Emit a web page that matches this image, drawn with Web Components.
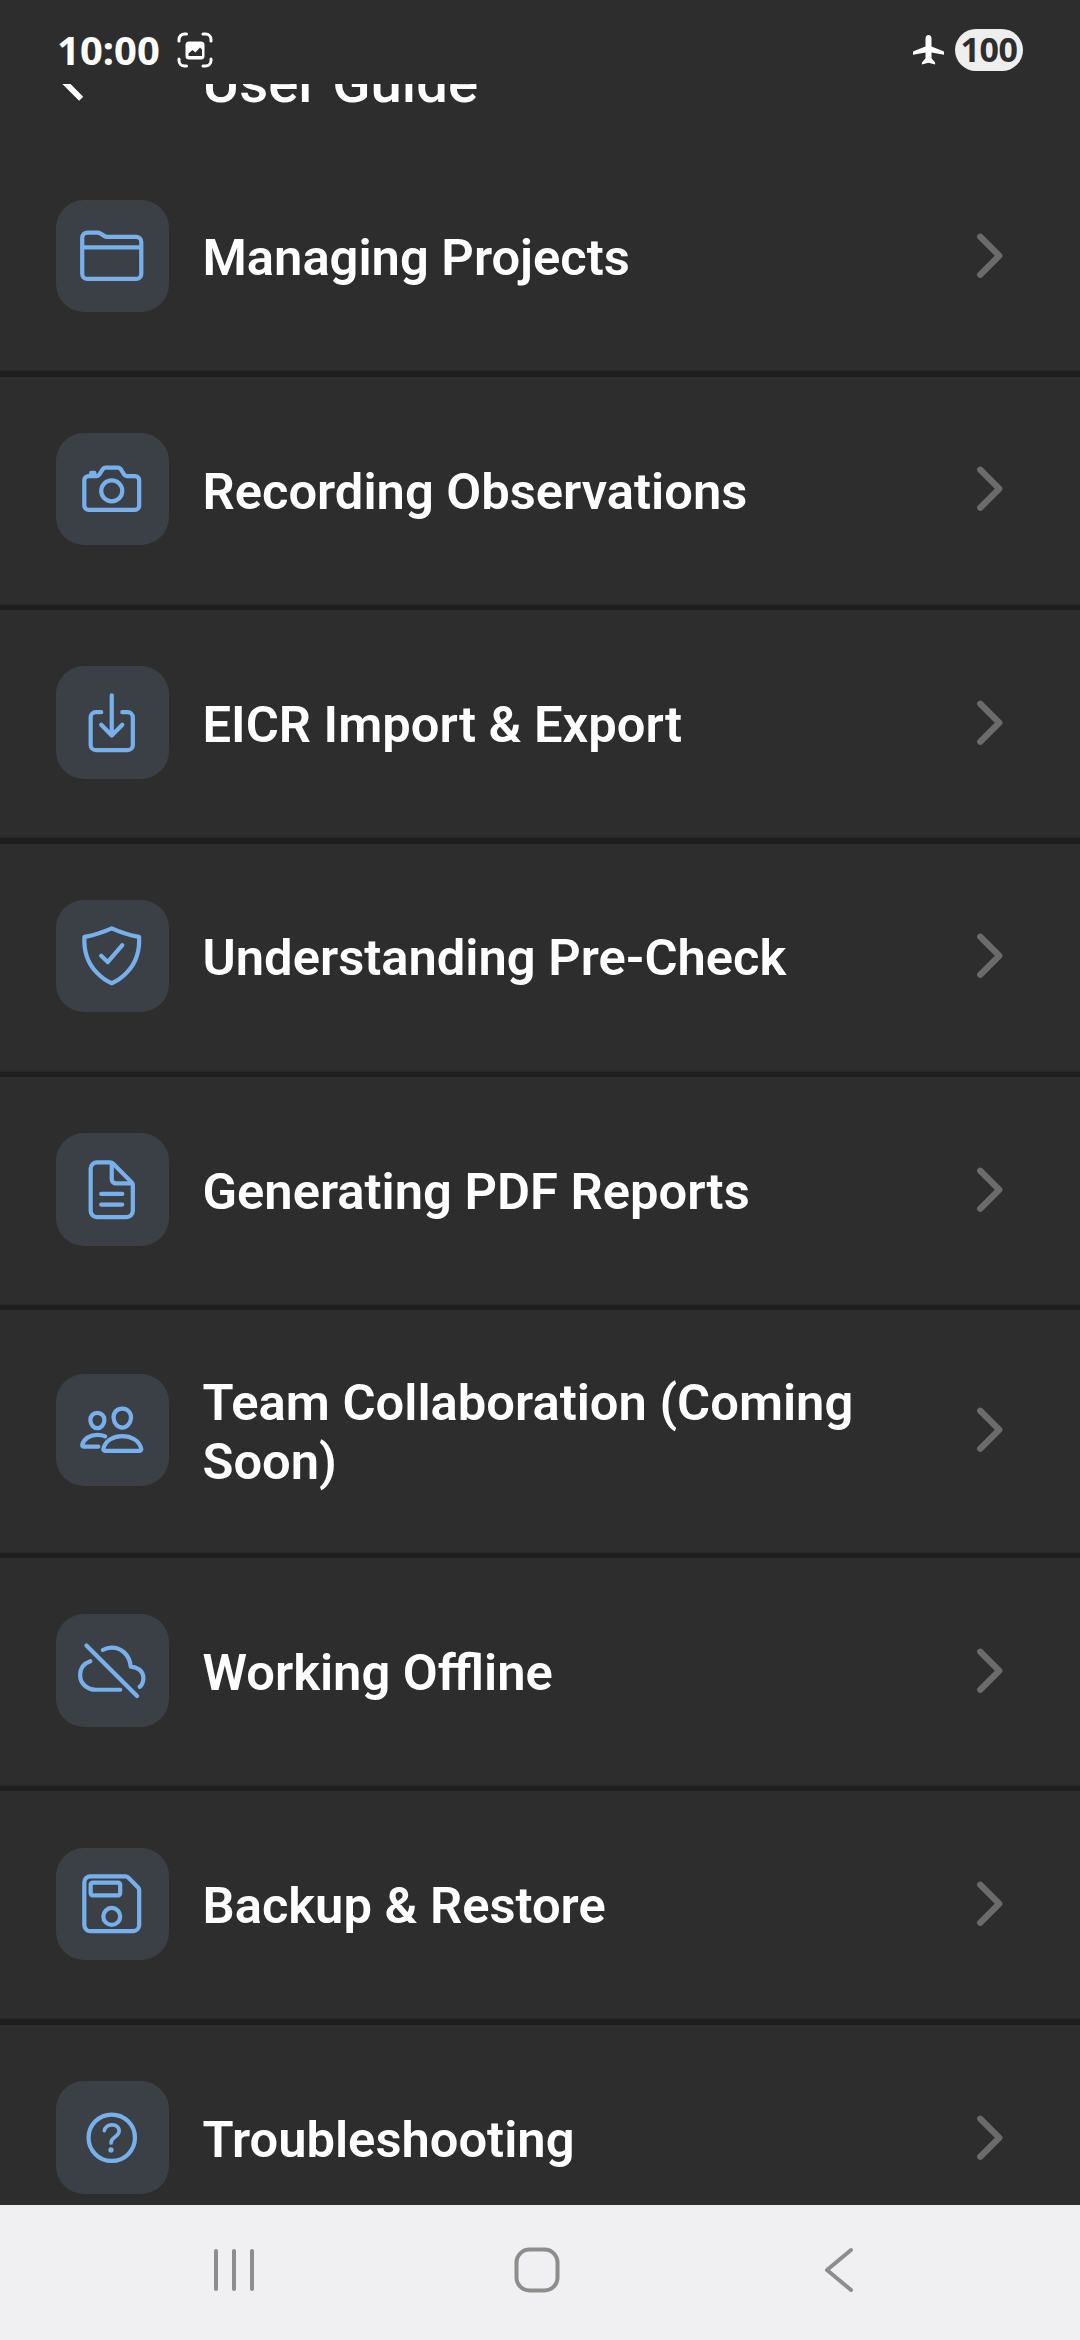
<!DOCTYPE html>
<html lang="en">
<head>
<meta charset="utf-8">
<title>User Guide</title>
<style>
    html, body {
        margin: 0;
        height: 2340px;
        overflow: hidden;
        background: #2d2d2d;
    }
    body {
        font-family: Roboto, 'Liberation Sans', sans-serif;
        color: #fff;
    }
</style>
</head>
<body>
<guide-screen>
    <status-bar slot="status" time="10:00" battery="100"></status-bar>
    <guide-header>User Guide</guide-header>
    <guide-item icon="folder">Managing Projects</guide-item>
    <guide-item icon="camera">Recording Observations</guide-item>
    <guide-item icon="download">EICR Import &amp; Export</guide-item>
    <guide-item icon="shield">Understanding Pre-Check</guide-item>
    <guide-item icon="document">Generating PDF Reports</guide-item>
    <guide-item icon="people">Team Collaboration (Coming Soon)</guide-item>
    <guide-item icon="offline">Working Offline</guide-item>
    <guide-item icon="save">Backup &amp; Restore</guide-item>
    <guide-item icon="help">Troubleshooting</guide-item>
    <nav-bar slot="nav"></nav-bar>
</guide-screen>

<script>
const icons = {
    folder: `<path d="M440 432H72a40 40 0 01-40-40V120a40 40 0 0140-40h75.89a40 40 0 0122.19 6.72l27.84 18.56a40 40 0 0022.19 6.72H440a40 40 0 0140 40v240a40 40 0 01-40 40zM32 192h448"/>`,
    camera: `<path d="M350.54 148.68l-26.62-42.06C318.31 100.08 310.62 96 302 96h-92c-8.62 0-16.31 4.08-21.92 10.62l-26.62 42.06C155.85 155.23 148.62 160 140 160H80a32 32 0 00-32 32v192a32 32 0 0032 32h352a32 32 0 0032-32V192a32 32 0 00-32-32h-59c-8.65 0-16.85-4.77-22.46-11.32z"/><circle cx="256" cy="272" r="80"/><path d="M124 158v-22h-24v22"/>`,
    download: `<path d="M336 176h40a40 40 0 0140 40v208a40 40 0 01-40 40H136a40 40 0 01-40-40V216a40 40 0 0140-40h40"/><path d="M176 272l80 80 80-80M256 48v288"/>`,
    shield: `<path d="M336 176L225.2 304 176 255.8"/><path d="M463.1 112.37C373.68 96.33 336.71 84.45 256 48c-80.71 36.45-117.68 48.33-207.1 64.37C32.7 369.13 240.58 457.79 256 464c15.42-6.21 223.3-94.87 207.1-351.63z"/>`,
    document: `<path d="M416 221.25V416a48 48 0 01-48 48H144a48 48 0 01-48-48V96a48 48 0 0148-48h98.75a32 32 0 0122.62 9.37l141.26 141.26a32 32 0 019.37 22.62z"/><path d="M256 56v120a32 32 0 0032 32h120M176 288h160M176 368h160"/>`,
    people: `<path d="M402 168c-2.93 40.67-33.1 72-66 72s-63.12-31.32-66-72c-3-42.31 26.37-72 66-72s69 30.46 66 72z"/><path d="M336 304c-65.17 0-127.84 32.37-143.54 95.41-2.08 8.34 3.15 16.59 11.72 16.59h263.65c8.57 0 13.77-8.25 11.72-16.59C463.85 335.36 401.18 304 336 304z"/><path d="M200 185.94c-2.34 32.48-26.72 58.06-53 58.06s-50.7-25.57-53-58.06C91.61 152.15 115.34 128 147 128s55.39 24.77 53 57.94z"/><path d="M206 306c-18.05-8.27-37.93-11.45-59-11.45-52 0-102.1 25.85-114.65 76.2-1.65 6.66 2.53 13.25 9.37 13.25H154"/>`,
    offline: `<path d="M93.72 183.25C49.49 198.05 16 233.1 16 288c0 66 54 112 120 112h184.37M467.82 377.27C485.24 363.3 496 341.61 496 312c0-59.82-53-85.76-96-88-8.89-89.54-71-144-144-144-26.16 0-48.79 6.93-67.6 18.14M448 448L64 64"/>`,
    save: `<path d="M380.93 57.37A32 32 0 00358.3 48H94.22A46.21 46.21 0 0048 94.22v323.56A46.21 46.21 0 0094.22 464h323.56A46.36 46.36 0 00464 417.78V153.7a32 32 0 00-9.37-22.63zM256 416a64 64 0 1164-64 63.92 63.92 0 01-64 64zm48-224H112a16 16 0 01-16-16v-64a16 16 0 0116-16h192a16 16 0 0116 16v64a16 16 0 01-16 16z"/>`,
    help: `<path d="M256 80a176 176 0 10176 176A176 176 0 00256 80z"/><path stroke-width="28" d="M200 202.29s.84-17.5 19.57-32.57C230.68 160.77 244 158.18 256 158c10.93-.14 20.69 1.67 26.53 4.45 10 4.76 29.47 16.38 29.47 41.09 0 26-17 37.81-36.37 50.8S251 281.43 251 296"/><circle cx="250" cy="348" r="20" fill="currentColor" stroke="none"/>`
};

class GuideScreen extends HTMLElement {
    constructor() {
        super();
        this.attachShadow({mode: 'open'});
        this.shadowRoot.innerHTML = `
            <style>
                :host {
                    display: flex;
                    flex-direction: column;
                    height: 2340px;
                    background: #2d2d2d;
                }
                .list {
                    flex: 1;
                    min-height: 0;
                    overflow: hidden;
                }
            </style>
            <slot name="status"></slot>
            <div class="list"><slot></slot></div>
            <slot name="nav"></slot>
        `;
    }
}
window.customElements.define('guide-screen', GuideScreen);

class StatusBar extends HTMLElement {
    constructor() {
        super();
        this.attachShadow({mode: 'open'});
        this.shadowRoot.innerHTML = `
            <style>
                :host {
                    display: flex;
                    align-items: center;
                    box-sizing: border-box;
                    flex: none;
                    height: 84px;
                    padding: 16px 57px 0;
                    font-family: 'Noto Sans', 'Open Sans', sans-serif;
                    font-weight: 700;
                }
                svg { display: block; }
                .time {
                    font-size: 40px;
                    line-height: 68px;
                    flex: 1;
                    display: flex;
                    align-items: center;
                    gap: 17px;
                }
                .plane { margin-right: 11px; }
                .battery {
                    width: 68px;
                    height: 42px;
                    border-radius: 21px;
                    background: #eee;
                    color: #2d2d2d;
                    font-size: 34px;
                    line-height: 41px;
                    letter-spacing: -0.4px;
                    text-align: center;
                }
            </style>
            <div class="time">
                <span></span>
                <svg width="36" height="36" viewBox="0 0 36 36" fill="none">
                    <path d="M2 9V7.500a5.500 5.500 0 0 1 5.500-5.500H9.500M26 2h2.500a5.500 5.500 0 0 1 5.500 5.500V9M34 27v1.500a5.500 5.500 0 0 1-5.500 5.500H26M9.500 34H7.500A5.500 5.500 0 0 1 2 28.500V27" stroke="#fff" stroke-width="3" stroke-linecap="round"/>
                    <rect x="8.500" y="9.500" width="19" height="18" rx="3.500" fill="#fff"/>
                    <path d="M11.500 24v-2.500l4-3.500 3 2.500 4.500-5 2 2V24z" fill="#2d2d2d"/>
                </svg>
            </div>
            <svg class="plane" width="32" height="32" viewBox="0 0 32 32">
                <path d="M16.500 1c-1.900 0-3 1.700-3 3.700v7.800L2.100 17C1.200 17.400 1 18 1 18.800v2L13.500 18.600v5.600l-3.600 4.200v2.100l6.600-1.700 6.600 1.700v-2.100L19.500 24.200v-5.600l12.500 2.200v-2c0-.8-.2-1.400-1.100-1.800L19.500 12.500V4.700C19.500 2.700 18.400 1 16.500 1z" fill="#fff"/>
            </svg>
            <div class="battery"></div>
        `;
        this.shadowRoot.querySelector('span').textContent = this.getAttribute('time');
        this.shadowRoot.querySelector('.battery').textContent = this.getAttribute('battery');
    }
}
window.customElements.define('status-bar', StatusBar);

class GuideHeader extends HTMLElement {
    constructor() {
        super();
        this.attachShadow({mode: 'open'});
        // scrolled under the status bar, only its lower part is left
        this.shadowRoot.innerHTML = `
            <style>
                :host {
                    display: flex;
                    align-items: flex-end;
                    box-sizing: border-box;
                    height: 59.25px;
                    padding: 0 56.25px 27.5px 49px;
                    overflow: hidden;
                }
                svg {
                    flex: none;
                    width: 67.5px;
                    height: 67.5px;
                    margin: 0 86px 2px 0;
                }
                .title {
                    font-size: 56.25px;
                    line-height: 66px;
                    font-weight: 500;
                }
            </style>
            <svg viewBox="0 0 512 512" fill="none" stroke="#fff" stroke-width="44">
                <path d="M244 400L100 256l144-144"/>
            </svg>
            <div class="title"><slot></slot></div>
        `;
    }
}
window.customElements.define('guide-header', GuideHeader);

class GuideItem extends HTMLElement {
    constructor() {
        super();
        this.attachShadow({mode: 'open'});
        this.shadowRoot.innerHTML = `
            <style>
                :host { display: block; }
                .row {
                    display: flex;
                    align-items: center;
                    padding: 56.25px;
                }
                .tile {
                    flex: none;
                    display: flex;
                    align-items: center;
                    justify-content: center;
                    width: 112.5px;
                    height: 112.5px;
                    border-radius: 28px;
                    background: #3b4047;
                    color: #78b0ec;
                }
                svg {
                    flex: none;
                    display: block;
                    width: 67.5px;
                    height: 67.5px;
                }
                .tile svg { margin-right: 1.5px; }
                .label {
                    flex: 1;
                    padding: 6px 33.75px 2px;
                    font-size: 50.7px;
                    line-height: 59.3px;
                    font-weight: 600;
                }
                .line {
                    height: 8.44px;
                    background: linear-gradient(#2d2d2d 1px, #262626 3.4px, #1e1e1e 3.4px);
                }
            </style>
            <div class="row">
                <div class="tile">
                    <svg viewBox="0 0 512 512" fill="none" stroke="currentColor" stroke-width="32" stroke-linecap="round" stroke-linejoin="round">${icons[this.getAttribute('icon')]}</svg>
                </div>
                <div class="label"><slot></slot></div>
                <svg viewBox="0 0 512 512" fill="none" stroke="#6b6b6b" stroke-width="48" stroke-linecap="round" stroke-linejoin="round">
                    <path d="M184 112l144 144-144 144"/>
                </svg>
            </div>
            <div class="line"></div>
        `;
    }
}
window.customElements.define('guide-item', GuideItem);

class NavBar extends HTMLElement {
    constructor() {
        super();
        this.attachShadow({mode: 'open'});
        this.shadowRoot.innerHTML = `
            <style>
                :host {
                    display: flex;
                    align-items: center;
                    justify-content: space-between;
                    box-sizing: border-box;
                    flex: none;
                    height: 135px;
                    padding: 0 214px 5px 208px;
                    background: #f0f0f2;
                }
                svg { display: block; }
                .home { margin-right: 10px; }
            </style>
            <svg width="52" height="48" viewBox="0 0 52 48" stroke="#8d8d8d" stroke-width="4" stroke-linecap="round">
                <path d="M8 5v38M26 5v38M44 5v38"/>
            </svg>
            <svg class="home" width="48" height="48" viewBox="0 0 48 48" fill="none" stroke="#8d8d8d" stroke-width="4">
                <rect x="3.500" y="3.500" width="41" height="41" rx="13"/>
            </svg>
            <svg width="42" height="48" viewBox="0 0 42 48" fill="none" stroke="#8d8d8d" stroke-width="4" stroke-linecap="round" stroke-linejoin="round">
                <path d="M27 4L3 24l24 20"/>
            </svg>
        `;
    }
}
window.customElements.define('nav-bar', NavBar);
</script>
</body>
</html>
